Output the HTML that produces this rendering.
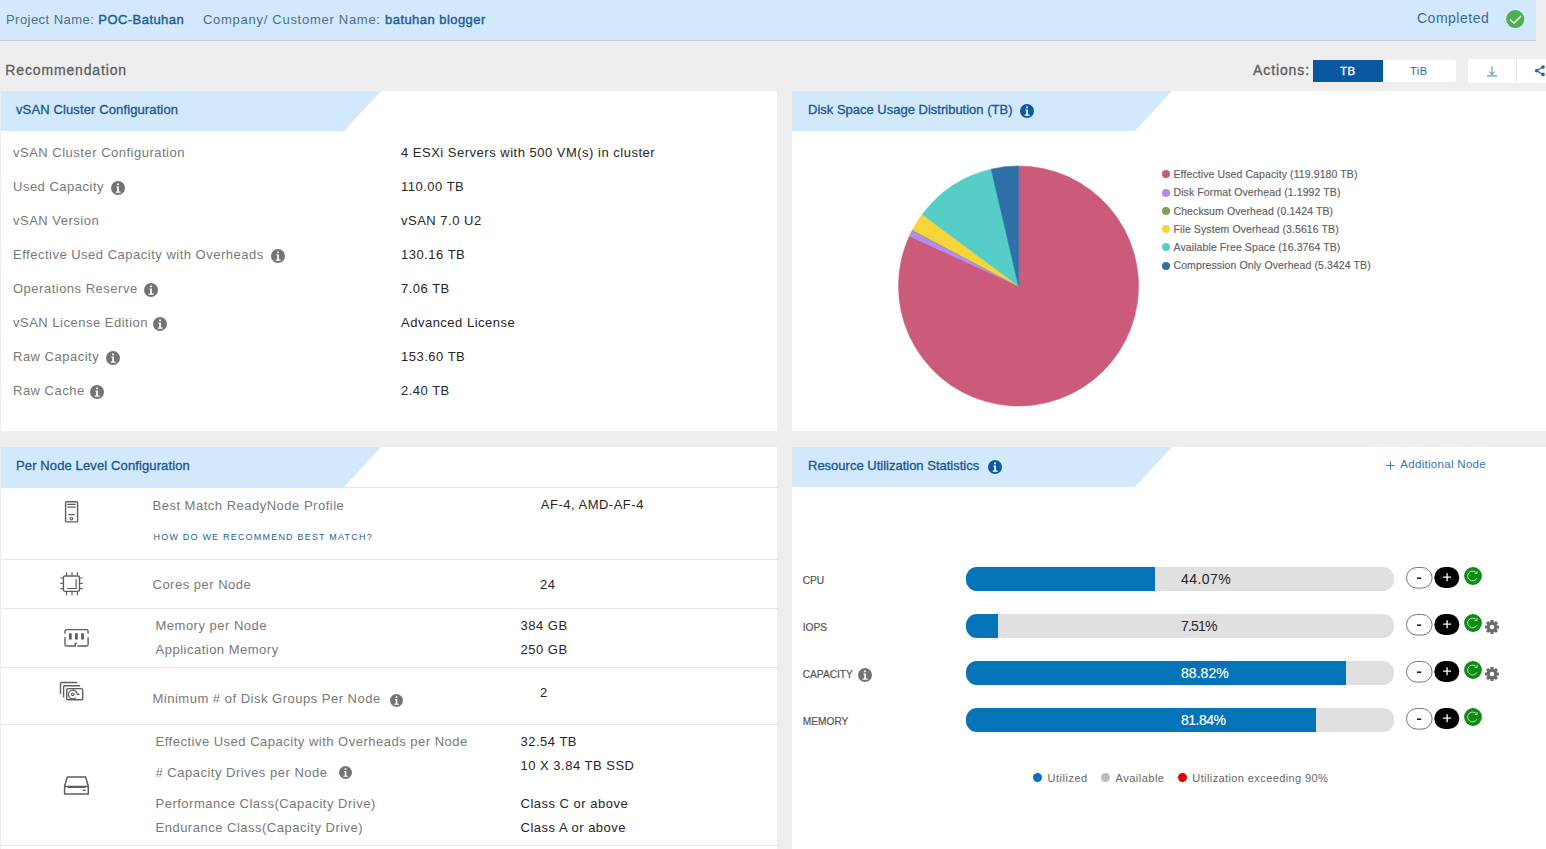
<!DOCTYPE html>
<html><head><meta charset="utf-8">
<style>
*{margin:0;padding:0;box-sizing:border-box}
html,body{width:1546px;height:849px;overflow:hidden;background:#eeeeee;font-family:"Liberation Sans",sans-serif;position:relative}
.t{position:absolute;white-space:nowrap;line-height:1;letter-spacing:0.5px}
.ic{position:absolute;display:block}
.bx{position:absolute}
.panel{position:absolute;background:#fff}
.tab{position:absolute;height:40px;background:#d2e8fb;clip-path:polygon(0 0,100% 0,calc(100% - 37px) 100%,0 100%)}
.ttl{color:#1a5590;letter-spacing:0.12px;-webkit-text-stroke:0.3px #1a5590}
.lbl{color:#787878}
.val{color:#262626}
.sep{position:absolute;height:1px;background:#e6e6e6}
</style></head><body>
<div class="bx" style="left:0;top:0;width:1536px;height:41px;background:#d2e8fb;border-bottom:1px solid #c6cdd3"></div>
<div class="t " style="left:6px;top:13.00px;font-size:13px;color:#4d6e8c;letter-spacing:0.45px;">Project Name: <span style="color:#1f5b94;-webkit-text-stroke:0.4px #1f5b94;letter-spacing:0.45px">POC-Batuhan</span></div>
<div class="t " style="left:203px;top:13.00px;font-size:13px;color:#4d6e8c;letter-spacing:0.72px;">Company/ Customer Name: <span style="color:#1f5b94;-webkit-text-stroke:0.4px #1f5b94;letter-spacing:0.45px">batuhan blogger</span></div>
<div class="t " style="left:1417px;top:11.15px;font-size:14px;color:#3d6894;letter-spacing:0.5px;">Completed</div>
<svg class="ic" style="left:1505.5px;top:9.5px" width="19" height="19" viewBox="0 0 19 19"><circle cx="9.25" cy="9.1" r="9" fill="#4caf50"/><path d="M3.9 9.4L8 13.1 15.1 6" stroke="#fff" stroke-width="1.4" fill="none"/></svg>
<div class="t " style="left:5.3px;top:63.15px;font-size:14px;color:#5e5e5e;-webkit-text-stroke:0.3px #5e5e5e;letter-spacing:0.85px;">Recommendation</div>
<div class="t " style="left:1253px;top:63.15px;font-size:14px;color:#5e5e5e;-webkit-text-stroke:0.35px #5e5e5e;letter-spacing:0.9px;">Actions:</div>
<div class="bx" style="left:1313px;top:60px;width:70px;height:22px;background:#0b57a0"></div>
<div class="bx" style="left:1383px;top:60px;width:73px;height:22px;background:#fff;border-radius:0 3px 3px 0"></div>
<div class="t " style="left:1340px;top:65.77px;font-size:11.5px;color:#fff;-webkit-text-stroke:0.35px #fff;">TB</div>
<div class="t " style="left:1410px;top:65.69px;font-size:11px;color:#2a6aa5;">TiB</div>
<div class="bx" style="left:1468px;top:59px;width:100px;height:24px;background:#fff;border-radius:3px"></div>
<div class="bx" style="left:1516px;top:59px;width:1px;height:24px;background:#e8e8e8"></div>
<svg class="ic" style="left:1485px;top:65px" width="14" height="13" viewBox="0 0 14 13"><path d="M7 1.5v8M4.2 6.6L7 9.4l2.8-2.8M2 10.9h10" stroke="#2f74b5" stroke-width="0.9" fill="none"/></svg>
<svg class="ic" style="left:1532px;top:63px" width="14" height="14" viewBox="0 0 14 14"><path d="M11 4.1L4.6 7.7 11 11.4" stroke="#1f64a8" stroke-width="1.2" fill="none"/><circle cx="11" cy="4.1" r="1.8" fill="#1f64a8"/><circle cx="4.6" cy="7.7" r="1.8" fill="#1f64a8"/><circle cx="11" cy="11.4" r="1.8" fill="#1f64a8"/></svg>
<div class="panel" style="left:1px;top:91px;width:776px;height:340px"></div>
<div class="panel" style="left:792px;top:91px;width:754px;height:340px"></div>
<div class="panel" style="left:1px;top:447px;width:776px;height:402px"></div>
<div class="panel" style="left:792px;top:447px;width:754px;height:402px"></div>
<div class="tab" style="left:1px;top:91px;width:380px"></div>
<div class="tab" style="left:792px;top:91px;width:380px"></div>
<div class="tab" style="left:1px;top:447px;width:380px"></div>
<div class="tab" style="left:792px;top:447px;width:380px"></div>
<div class="t ttl" style="left:16px;top:102.50px;font-size:13px;">vSAN Cluster Configuration</div>
<div class="t lbl" style="left:13px;top:146.00px;font-size:13px;">vSAN Cluster Configuration</div>
<div class="t val" style="left:401px;top:146.00px;font-size:13px;">4 ESXi Servers with 500 VM(s) in cluster</div>
<div class="t lbl" style="left:13px;top:180.00px;font-size:13px;">Used Capacity</div>
<svg class="ic" style="left:111.0px;top:181.0px" width="14" height="14" viewBox="0 0 14 14"><circle cx="7" cy="7" r="7" fill="#747474"/><rect x="6.1" y="2.4" width="1.8" height="1.8" rx="0.3" fill="#fff"/><path d="M5.4 5.5h2.5v4.9h1.7v1.3H4.7v-1.3h1.5V6.6h-.8z" fill="#fff"/></svg>
<div class="t val" style="left:401px;top:180.00px;font-size:13px;">110.00 TB</div>
<div class="t lbl" style="left:13px;top:214.00px;font-size:13px;">vSAN Version</div>
<div class="t val" style="left:401px;top:214.00px;font-size:13px;">vSAN 7.0 U2</div>
<div class="t lbl" style="left:13px;top:248.00px;font-size:13px;">Effective Used Capacity with Overheads</div>
<svg class="ic" style="left:271.0px;top:249.0px" width="14" height="14" viewBox="0 0 14 14"><circle cx="7" cy="7" r="7" fill="#747474"/><rect x="6.1" y="2.4" width="1.8" height="1.8" rx="0.3" fill="#fff"/><path d="M5.4 5.5h2.5v4.9h1.7v1.3H4.7v-1.3h1.5V6.6h-.8z" fill="#fff"/></svg>
<div class="t val" style="left:401px;top:248.00px;font-size:13px;">130.16 TB</div>
<div class="t lbl" style="left:13px;top:282.00px;font-size:13px;">Operations Reserve</div>
<svg class="ic" style="left:144.0px;top:283.0px" width="14" height="14" viewBox="0 0 14 14"><circle cx="7" cy="7" r="7" fill="#747474"/><rect x="6.1" y="2.4" width="1.8" height="1.8" rx="0.3" fill="#fff"/><path d="M5.4 5.5h2.5v4.9h1.7v1.3H4.7v-1.3h1.5V6.6h-.8z" fill="#fff"/></svg>
<div class="t val" style="left:401px;top:282.00px;font-size:13px;">7.06 TB</div>
<div class="t lbl" style="left:13px;top:316.00px;font-size:13px;">vSAN License Edition</div>
<svg class="ic" style="left:153.0px;top:317.0px" width="14" height="14" viewBox="0 0 14 14"><circle cx="7" cy="7" r="7" fill="#747474"/><rect x="6.1" y="2.4" width="1.8" height="1.8" rx="0.3" fill="#fff"/><path d="M5.4 5.5h2.5v4.9h1.7v1.3H4.7v-1.3h1.5V6.6h-.8z" fill="#fff"/></svg>
<div class="t val" style="left:401px;top:316.00px;font-size:13px;">Advanced License</div>
<div class="t lbl" style="left:13px;top:350.00px;font-size:13px;">Raw Capacity</div>
<svg class="ic" style="left:106.0px;top:351.0px" width="14" height="14" viewBox="0 0 14 14"><circle cx="7" cy="7" r="7" fill="#747474"/><rect x="6.1" y="2.4" width="1.8" height="1.8" rx="0.3" fill="#fff"/><path d="M5.4 5.5h2.5v4.9h1.7v1.3H4.7v-1.3h1.5V6.6h-.8z" fill="#fff"/></svg>
<div class="t val" style="left:401px;top:350.00px;font-size:13px;">153.60 TB</div>
<div class="t lbl" style="left:13px;top:384.00px;font-size:13px;">Raw Cache</div>
<svg class="ic" style="left:90.0px;top:385.0px" width="14" height="14" viewBox="0 0 14 14"><circle cx="7" cy="7" r="7" fill="#747474"/><rect x="6.1" y="2.4" width="1.8" height="1.8" rx="0.3" fill="#fff"/><path d="M5.4 5.5h2.5v4.9h1.7v1.3H4.7v-1.3h1.5V6.6h-.8z" fill="#fff"/></svg>
<div class="t val" style="left:401px;top:384.00px;font-size:13px;">2.40 TB</div>
<div class="t ttl" style="left:808px;top:102.50px;font-size:13px;letter-spacing:0px;">Disk Space Usage Distribution (TB)</div>
<svg class="ic" style="left:1020.0px;top:103.8px" width="14" height="14" viewBox="0 0 14 14"><circle cx="7" cy="7" r="7" fill="#0f59a3"/><rect x="6.1" y="2.4" width="1.8" height="1.8" rx="0.3" fill="#fff"/><path d="M5.4 5.5h2.5v4.9h1.7v1.3H4.7v-1.3h1.5V6.6h-.8z" fill="#fff"/></svg>
<svg class="ic" style="left:0;top:0" width="1546" height="849"><path d="M1018.5 286L1018.50 166.00A120 120 0 1 1 909.39 236.05Z" fill="#cc5a7b" stroke="#cc5a7b" stroke-width="0.6" stroke-linejoin="round"/><path d="M1018.5 286L909.39 236.05A120 120 0 0 1 912.10 230.51Z" fill="#b08bf5" stroke="#b08bf5" stroke-width="0.6" stroke-linejoin="round"/><path d="M1018.5 286L912.10 230.51A120 120 0 0 1 912.44 229.86Z" fill="#7da253" stroke="#7da253" stroke-width="0.6" stroke-linejoin="round"/><path d="M1018.5 286L912.44 229.86A120 120 0 0 1 922.22 214.38Z" fill="#f7d53a" stroke="#f7d53a" stroke-width="0.6" stroke-linejoin="round"/><path d="M1018.5 286L922.22 214.38A120 120 0 0 1 991.25 169.13Z" fill="#57cdc7" stroke="#57cdc7" stroke-width="0.6" stroke-linejoin="round"/><path d="M1018.5 286L991.25 169.13A120 120 0 0 1 1018.50 166.00Z" fill="#2f70a8" stroke="#2f70a8" stroke-width="0.6" stroke-linejoin="round"/></svg>
<div class="bx" style="left:1162px;top:170.40px;width:8px;height:8px;border-radius:50%;background:#cc5a7b"></div>
<div class="t " style="left:1173.5px;top:169.11px;font-size:10.5px;color:#606060;letter-spacing:0.1px;-webkit-text-stroke:0.15px #606060;">Effective Used Capacity (119.9180 TB)</div>
<div class="bx" style="left:1162px;top:188.66px;width:8px;height:8px;border-radius:50%;background:#b08bf5"></div>
<div class="t " style="left:1173.5px;top:187.37px;font-size:10.5px;color:#606060;letter-spacing:0.1px;-webkit-text-stroke:0.15px #606060;">Disk Format Overhead (1.1992 TB)</div>
<div class="bx" style="left:1162px;top:206.92px;width:8px;height:8px;border-radius:50%;background:#7da253"></div>
<div class="t " style="left:1173.5px;top:205.63px;font-size:10.5px;color:#606060;letter-spacing:0.1px;-webkit-text-stroke:0.15px #606060;">Checksum Overhead (0.1424 TB)</div>
<div class="bx" style="left:1162px;top:225.18px;width:8px;height:8px;border-radius:50%;background:#f7d53a"></div>
<div class="t " style="left:1173.5px;top:223.89px;font-size:10.5px;color:#606060;letter-spacing:0.1px;-webkit-text-stroke:0.15px #606060;">File System Overhead (3.5616 TB)</div>
<div class="bx" style="left:1162px;top:243.44px;width:8px;height:8px;border-radius:50%;background:#57cdc7"></div>
<div class="t " style="left:1173.5px;top:242.15px;font-size:10.5px;color:#606060;letter-spacing:0.1px;-webkit-text-stroke:0.15px #606060;">Available Free Space (16.3764 TB)</div>
<div class="bx" style="left:1162px;top:261.70px;width:8px;height:8px;border-radius:50%;background:#2f70a8"></div>
<div class="t " style="left:1173.5px;top:260.41px;font-size:10.5px;color:#606060;letter-spacing:0.1px;-webkit-text-stroke:0.15px #606060;">Compression Only Overhead (5.3424 TB)</div>
<div class="t ttl" style="left:16px;top:458.80px;font-size:13px;">Per Node Level Configuration</div>
<div class="sep" style="left:1px;top:487px;width:776px"></div>
<div class="sep" style="left:1px;top:559px;width:776px"></div>
<div class="sep" style="left:1px;top:608px;width:776px"></div>
<div class="sep" style="left:1px;top:667px;width:776px"></div>
<div class="sep" style="left:1px;top:724px;width:776px"></div>
<div class="sep" style="left:1px;top:845px;width:776px"></div>
<div class="t lbl" style="left:152.5px;top:499.20px;font-size:13px;">Best Match ReadyNode Profile</div>
<div class="t " style="left:153.5px;top:532.58px;font-size:9px;color:#285e92;letter-spacing:1.2px;">HOW DO WE RECOMMEND BEST MATCH?</div>
<div class="t val" style="left:540.8px;top:497.50px;font-size:13px;">AF-4, AMD-AF-4</div>
<div class="t lbl" style="left:152.5px;top:578.30px;font-size:13px;">Cores per Node</div>
<div class="t val" style="left:540px;top:578.00px;font-size:13px;">24</div>
<div class="t lbl" style="left:155.5px;top:619.00px;font-size:13px;">Memory per Node</div>
<div class="t lbl" style="left:155.5px;top:642.50px;font-size:13px;">Application Memory</div>
<div class="t val" style="left:520.5px;top:618.50px;font-size:13px;">384 GB</div>
<div class="t val" style="left:520.5px;top:642.50px;font-size:13px;">250 GB</div>
<div class="t lbl" style="left:152.5px;top:692.00px;font-size:13px;">Minimum # of Disk Groups Per Node</div>
<svg class="ic" style="left:390.1px;top:693.5px" width="13" height="13" viewBox="0 0 14 14"><circle cx="7" cy="7" r="7" fill="#747474"/><rect x="6.1" y="2.4" width="1.8" height="1.8" rx="0.3" fill="#fff"/><path d="M5.4 5.5h2.5v4.9h1.7v1.3H4.7v-1.3h1.5V6.6h-.8z" fill="#fff"/></svg>
<div class="t val" style="left:540px;top:685.50px;font-size:13px;">2</div>
<div class="t lbl" style="left:155.5px;top:735.30px;font-size:13px;">Effective Used Capacity with Overheads per Node</div>
<div class="t lbl" style="left:155.5px;top:765.50px;font-size:13px;"># Capacity Drives per Node</div>
<svg class="ic" style="left:339.4px;top:765.7px" width="13" height="13" viewBox="0 0 14 14"><circle cx="7" cy="7" r="7" fill="#747474"/><rect x="6.1" y="2.4" width="1.8" height="1.8" rx="0.3" fill="#fff"/><path d="M5.4 5.5h2.5v4.9h1.7v1.3H4.7v-1.3h1.5V6.6h-.8z" fill="#fff"/></svg>
<div class="t lbl" style="left:155.5px;top:796.70px;font-size:13px;">Performance Class(Capacity Drive)</div>
<div class="t lbl" style="left:155.5px;top:820.80px;font-size:13px;">Endurance Class(Capacity Drive)</div>
<div class="t val" style="left:520.5px;top:735.00px;font-size:13px;">32.54 TB</div>
<div class="t val" style="left:520.5px;top:759.00px;font-size:13px;">10 X 3.84 TB SSD</div>
<div class="t val" style="left:520.5px;top:796.70px;font-size:13px;">Class C or above</div>
<div class="t val" style="left:520.5px;top:820.80px;font-size:13px;">Class A or above</div>
<svg class="ic" style="left:50px;top:490px" width="50" height="320" viewBox="50 490 50 320" fill="none" stroke="#5e5e5e" stroke-width="1.4">
<rect x="65.6" y="501.7" width="12" height="20.2" rx="1"/>
<path d="M67.3 504.4h8.4M67.3 507.1h8.4M68.2 514.6h6.6" stroke-width="1.1"/>
<circle cx="71.4" cy="518.6" r="1.3" stroke-width="1.1"/>
<rect x="63.4" y="576" width="16.1" height="15.4" rx="1.6"/>
<path d="M66.5 572.3v3M72 572.3v3M77.4 572.3v3M66.5 592v3.3M72 592v3.3M77.4 592v3.3M60.3 578h2.5M60.3 583.4h2.5M60.3 588.7h2.5M80.2 578h2.5M80.2 583.4h2.5M80.2 588.7h2.5" stroke-width="1.2"/>
<path d="M76.1 579.2v9.3h-8.9" stroke-width="1.2"/>
<path d="M65 633.8V631.4a1.8 1.8 0 0 1 1.8-1.8H86.3a1.8 1.8 0 0 1 1.8 1.8v2.4M65 637.3v7.1a1.6 1.6 0 0 0 1.6 1.6H75.3v-2.6H77M77.4 646H86.5a1.6 1.6 0 0 0 1.6-1.6v-7.1"/>
<path d="M70.3 633.2v6.2M76.4 633.2v6.2M82.5 633.2v6.2" stroke-width="2.8"/>
<path d="M60.5 694V683.5a1 1 0 0 1 1-1H77.2M63.6 697.4V686.7a1 1 0 0 1 1-1H80.2"/>
<rect x="66.7" y="688.6" width="16" height="11.2" rx="1.2"/>
<circle cx="72.8" cy="694.3" r="1.3" stroke-width="1.2"/>
<path d="M79.6 694.3H77.2A4.4 4.4 0 1 0 75.9 697.6M72.6 689.9a4.4 4.4 0 0 1 4.5 4.2" stroke-width="1.2"/>
<path d="M67.2 777.1H85.7l2.6 9.2v7.8H64.6v-7.8z" stroke-linejoin="round" stroke-width="1.5"/>
<path d="M64.6 786.5H88.3M67.5 787.3h18.2" stroke-width="1.5"/>
<path d="M82.5 790.3h3.2" stroke-width="1.3"/>
</svg>
<div class="t ttl" style="left:808px;top:458.80px;font-size:13px;letter-spacing:0px;">Resource Utilization Statistics</div>
<svg class="ic" style="left:988.0px;top:459.6px" width="14" height="14" viewBox="0 0 14 14"><circle cx="7" cy="7" r="7" fill="#0f59a3"/><rect x="6.1" y="2.4" width="1.8" height="1.8" rx="0.3" fill="#fff"/><path d="M5.4 5.5h2.5v4.9h1.7v1.3H4.7v-1.3h1.5V6.6h-.8z" fill="#fff"/></svg>
<svg class="ic" style="left:1385px;top:460px" width="11" height="11" viewBox="0 0 11 11"><path d="M5.5 1.3v8.4M1.3 5.5h8.4" stroke="#3f7dbd" stroke-width="1"/></svg>
<div class="t " style="left:1400.3px;top:459.07px;font-size:11.5px;color:#3574b6;letter-spacing:0.3px;">Additional Node</div>
<div class="t " style="left:802.7px;top:576.37px;font-size:10.2px;color:#555555;letter-spacing:0px;-webkit-text-stroke:0.2px #555;">CPU</div>
<div class="bx" style="left:966px;top:567px;width:428px;height:24px;background:#e0e0e0;border-radius:11px;overflow:hidden"><div style="width:44.07%;height:24px;background:#0473b8"></div></div>
<div class="t " style="left:1181px;top:572.15px;font-size:14px;color:#262626;letter-spacing:0.45px;">44.07%</div>
<svg class="ic" style="left:1405px;top:566.5px" width="56" height="23" viewBox="0 0 56 23"><rect x="1.5" y="0.5" width="25.6" height="20.6" rx="10.3" fill="#fff" stroke="#777" stroke-width="1"/><path d="M12 11.2h4.2" stroke="#000" stroke-width="1.4"/><rect x="29.3" y="0" width="25" height="21" rx="10.5" fill="#000"/><path d="M42.1 6.2v8M38.1 10.2h8" stroke="#fff" stroke-width="1.3"/></svg>
<svg class="ic" style="left:1464px;top:567px" width="18" height="18" viewBox="0 0 18 18"><circle cx="9" cy="9" r="8.9" fill="#0f8a12"/><path d="M12.6 6.2A4.9 4.9 0 1 0 12.9 11.2" stroke="#b8f5b8" stroke-width="0.9" fill="none"/><path d="M10.6 6.5h2.5V4" stroke="#b8f5b8" stroke-width="0.9" fill="none"/></svg>
<div class="t " style="left:802.7px;top:623.37px;font-size:10.2px;color:#555555;letter-spacing:0px;-webkit-text-stroke:0.2px #555;">IOPS</div>
<div class="bx" style="left:966px;top:614px;width:428px;height:24px;background:#e0e0e0;border-radius:11px;overflow:hidden"><div style="width:7.51%;height:24px;background:#0473b8"></div></div>
<div class="t " style="left:1181px;top:619.15px;font-size:14px;color:#262626;letter-spacing:-0.8px;">7.51%</div>
<svg class="ic" style="left:1405px;top:613.5px" width="56" height="23" viewBox="0 0 56 23"><rect x="1.5" y="0.5" width="25.6" height="20.6" rx="10.3" fill="#fff" stroke="#777" stroke-width="1"/><path d="M12 11.2h4.2" stroke="#000" stroke-width="1.4"/><rect x="29.3" y="0" width="25" height="21" rx="10.5" fill="#000"/><path d="M42.1 6.2v8M38.1 10.2h8" stroke="#fff" stroke-width="1.3"/></svg>
<svg class="ic" style="left:1464px;top:614px" width="18" height="18" viewBox="0 0 18 18"><circle cx="9" cy="9" r="8.9" fill="#0f8a12"/><path d="M12.6 6.2A4.9 4.9 0 1 0 12.9 11.2" stroke="#b8f5b8" stroke-width="0.9" fill="none"/><path d="M10.6 6.5h2.5V4" stroke="#b8f5b8" stroke-width="0.9" fill="none"/></svg>
<svg class="ic" style="left:1484.3px;top:619.4px" width="16" height="16" viewBox="-8 -8 16 16"><g fill="#6b6b6b"><rect x="-1.6" y="-7" width="3.2" height="3.4" rx="0.6" transform="rotate(0)"/><rect x="-1.6" y="-7" width="3.2" height="3.4" rx="0.6" transform="rotate(45)"/><rect x="-1.6" y="-7" width="3.2" height="3.4" rx="0.6" transform="rotate(90)"/><rect x="-1.6" y="-7" width="3.2" height="3.4" rx="0.6" transform="rotate(135)"/><rect x="-1.6" y="-7" width="3.2" height="3.4" rx="0.6" transform="rotate(180)"/><rect x="-1.6" y="-7" width="3.2" height="3.4" rx="0.6" transform="rotate(225)"/><rect x="-1.6" y="-7" width="3.2" height="3.4" rx="0.6" transform="rotate(270)"/><rect x="-1.6" y="-7" width="3.2" height="3.4" rx="0.6" transform="rotate(315)"/><circle r="5.2"/></g><circle r="2.3" fill="#fff"/></svg>
<div class="t " style="left:802.7px;top:670.37px;font-size:10.2px;color:#555555;letter-spacing:0px;-webkit-text-stroke:0.2px #555;">CAPACITY</div>
<svg class="ic" style="left:857.7px;top:668.0px" width="14" height="14" viewBox="0 0 14 14"><circle cx="7" cy="7" r="7" fill="#747474"/><rect x="6.1" y="2.4" width="1.8" height="1.8" rx="0.3" fill="#fff"/><path d="M5.4 5.5h2.5v4.9h1.7v1.3H4.7v-1.3h1.5V6.6h-.8z" fill="#fff"/></svg>
<div class="bx" style="left:966px;top:661px;width:428px;height:24px;background:#e0e0e0;border-radius:11px;overflow:hidden"><div style="width:88.82%;height:24px;background:#0473b8"></div></div>
<div class="t " style="left:1181px;top:666.15px;font-size:14px;color:#fff;letter-spacing:0.05px;-webkit-text-stroke:0.15px #fff;">88.82%</div>
<svg class="ic" style="left:1405px;top:660.5px" width="56" height="23" viewBox="0 0 56 23"><rect x="1.5" y="0.5" width="25.6" height="20.6" rx="10.3" fill="#fff" stroke="#777" stroke-width="1"/><path d="M12 11.2h4.2" stroke="#000" stroke-width="1.4"/><rect x="29.3" y="0" width="25" height="21" rx="10.5" fill="#000"/><path d="M42.1 6.2v8M38.1 10.2h8" stroke="#fff" stroke-width="1.3"/></svg>
<svg class="ic" style="left:1464px;top:661px" width="18" height="18" viewBox="0 0 18 18"><circle cx="9" cy="9" r="8.9" fill="#0f8a12"/><path d="M12.6 6.2A4.9 4.9 0 1 0 12.9 11.2" stroke="#b8f5b8" stroke-width="0.9" fill="none"/><path d="M10.6 6.5h2.5V4" stroke="#b8f5b8" stroke-width="0.9" fill="none"/></svg>
<svg class="ic" style="left:1484.3px;top:666.4px" width="16" height="16" viewBox="-8 -8 16 16"><g fill="#6b6b6b"><rect x="-1.6" y="-7" width="3.2" height="3.4" rx="0.6" transform="rotate(0)"/><rect x="-1.6" y="-7" width="3.2" height="3.4" rx="0.6" transform="rotate(45)"/><rect x="-1.6" y="-7" width="3.2" height="3.4" rx="0.6" transform="rotate(90)"/><rect x="-1.6" y="-7" width="3.2" height="3.4" rx="0.6" transform="rotate(135)"/><rect x="-1.6" y="-7" width="3.2" height="3.4" rx="0.6" transform="rotate(180)"/><rect x="-1.6" y="-7" width="3.2" height="3.4" rx="0.6" transform="rotate(225)"/><rect x="-1.6" y="-7" width="3.2" height="3.4" rx="0.6" transform="rotate(270)"/><rect x="-1.6" y="-7" width="3.2" height="3.4" rx="0.6" transform="rotate(315)"/><circle r="5.2"/></g><circle r="2.3" fill="#fff"/></svg>
<div class="t " style="left:802.7px;top:717.37px;font-size:10.2px;color:#555555;letter-spacing:0px;-webkit-text-stroke:0.2px #555;">MEMORY</div>
<div class="bx" style="left:966px;top:708px;width:428px;height:24px;background:#e0e0e0;border-radius:11px;overflow:hidden"><div style="width:81.84%;height:24px;background:#0473b8"></div></div>
<div class="t " style="left:1181px;top:713.15px;font-size:14px;color:#fff;letter-spacing:-0.5px;-webkit-text-stroke:0.15px #fff;">81.84%</div>
<svg class="ic" style="left:1405px;top:707.5px" width="56" height="23" viewBox="0 0 56 23"><rect x="1.5" y="0.5" width="25.6" height="20.6" rx="10.3" fill="#fff" stroke="#777" stroke-width="1"/><path d="M12 11.2h4.2" stroke="#000" stroke-width="1.4"/><rect x="29.3" y="0" width="25" height="21" rx="10.5" fill="#000"/><path d="M42.1 6.2v8M38.1 10.2h8" stroke="#fff" stroke-width="1.3"/></svg>
<svg class="ic" style="left:1464px;top:708px" width="18" height="18" viewBox="0 0 18 18"><circle cx="9" cy="9" r="8.9" fill="#0f8a12"/><path d="M12.6 6.2A4.9 4.9 0 1 0 12.9 11.2" stroke="#b8f5b8" stroke-width="0.9" fill="none"/><path d="M10.6 6.5h2.5V4" stroke="#b8f5b8" stroke-width="0.9" fill="none"/></svg>
<div class="bx" style="left:1032.9px;top:773.1px;width:9px;height:9px;border-radius:50%;background:#0473b8"></div>
<div class="t " style="left:1047.6px;top:772.69px;font-size:11px;color:#666666;">Utilized</div>
<div class="bx" style="left:1101.3px;top:773.1px;width:9px;height:9px;border-radius:50%;background:#bdbdbd"></div>
<div class="t " style="left:1115.5px;top:772.69px;font-size:11px;color:#666666;">Available</div>
<div class="bx" style="left:1178.1px;top:773.1px;width:9px;height:9px;border-radius:50%;background:#e00000"></div>
<div class="t " style="left:1192.3px;top:772.69px;font-size:11px;color:#666666;letter-spacing:0.4px;">Utilization exceeding 90%</div>
</body></html>
